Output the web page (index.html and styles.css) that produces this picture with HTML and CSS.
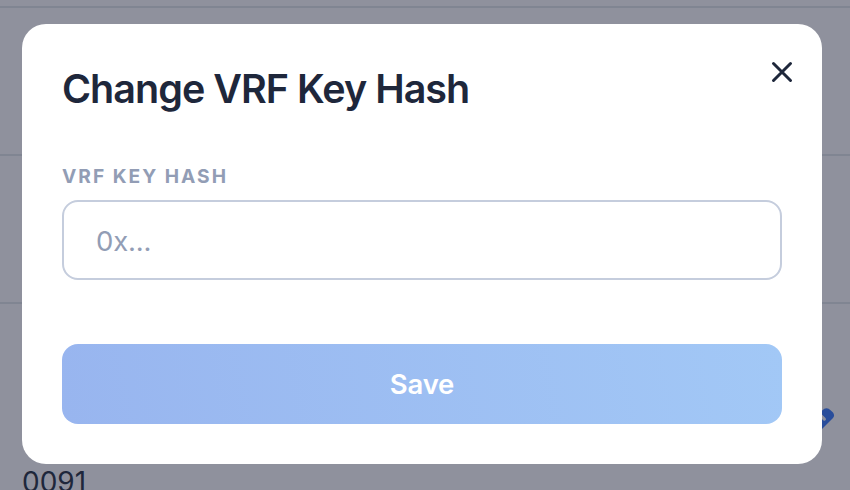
FILE: index.html
```html
<!DOCTYPE html>
<html lang="en">
<head>
<meta charset="utf-8">
<title>Change VRF Key Hash</title>
<link rel="stylesheet" href="styles.css">
</head>
<body>
<main class="page">
  <div class="row row-first"></div>
  <div class="row"></div>
  <div class="row"></div>
  <div class="details">
    <svg class="edit" viewBox="0 0 24 24" aria-hidden="true"><path d="M0 20 14 5Q18 1 22 5L24 7Q26 10 24 12L9 27H0Z"/><path class="edit-line" d="m13 10 3 3"/></svg>
    <span class="value">0091</span>
  </div>
</main>
<div class="overlay">
  <form class="modal">
    <header class="header">
      <h1 class="title">Change VRF Key Hash</h1>
      <button class="close" type="button" aria-label="Close"><svg viewBox="0 0 22 22"><path d="m2.5 2.5 17 17M19.5 2.5l-17 17"/></svg></button>
    </header>
    <label class="label" for="hash">VRF KEY HASH</label>
    <input class="input" id="hash" placeholder="0x...">
    <button class="save" type="button">Save</button>
  </form>
</div>
</body>
</html>
```
FILE: styles.css
```css
* { box-sizing: border-box; }
body { margin: 0; font-family: Inter, sans-serif; overflow: hidden; height: 490px; background: #8f919d; }
.page { height: 490px; overflow: hidden; }
.row { height: 148px; border-bottom: 2px solid #808592; }
.row-first { height: 8px; }
.details { position: relative; padding: 160px 22px 0; }
.value { font-size: 28px; line-height: 36px; color: #1e273b; }
.edit { position: absolute; left: 807px; top: 101px; width: 26px; height: 26px; fill: #294d9b; overflow: visible; }
.edit-line { stroke: #8f919d; stroke-width: 3; stroke-linecap: round; }
.overlay { position: absolute; inset: 0; padding: 24px 28px 26px 22px; }
.modal { display: flex; flex-direction: column; height: 440px; padding: 40px; border-radius: 24px; background: #fff; }
.header { display: flex; justify-content: space-between; height: 100px; }
.title { margin: 0; font-size: 39.5px; line-height: 50px; font-weight: 600; letter-spacing: -.98px; color: #1e273b; white-space: nowrap; }
.close { width: 22px; height: 22px; margin: -3px -11px 0 0; padding: 0; border: 0; background: none; }
.close svg { display: block; width: 22px; height: 22px; fill: none; stroke: #1e273b; stroke-width: 3; stroke-linecap: round; }
.label { height: 36px; font-size: 19.2px; line-height: 24px; font-weight: 700; letter-spacing: 2px; color: #929db5; }
.input { height: 80px; padding: 2px 32px 0; border: 2px solid #c5cddd; border-radius: 16px; font: 27.5px Inter, sans-serif; letter-spacing: -.2px; color: #1e273b; outline: 0; }
.input::placeholder { color: #929db5; opacity: 1; }
.save { height: 80px; margin-top: 64px; padding: 0 0 1px; border: 0; border-radius: 16px; background: linear-gradient(80deg, #98b5ef, #a2c8f6); font: 600 27.5px Inter, sans-serif; letter-spacing: -.2px; color: #fff; }
```
